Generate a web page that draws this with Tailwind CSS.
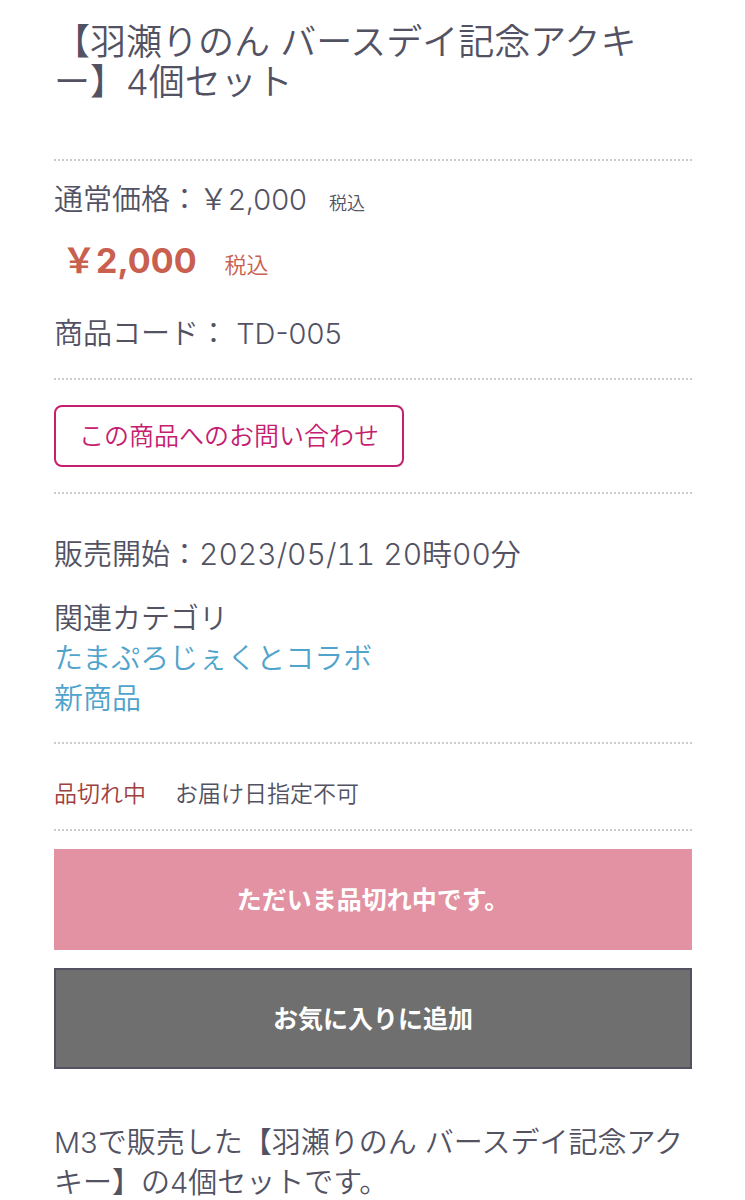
<!DOCTYPE html>
<html lang="ja">
<head>
<meta charset="utf-8">
<meta name="viewport" content="width=device-width, initial-scale=1">
<title>羽瀬りのん バースデイ記念アクキー 4個セット</title>
<script src="https://cdn.jsdelivr.net/npm/@tailwindcss/browser@4"></script>
</head>
<body class="bg-white font-['Inter','Noto_Sans_CJK_JP',sans-serif] font-[350] text-[#525263]">
<main class="pr-[53px] pl-[54px] pt-[22px]">
  <h1 class="border-b-2 border-dotted border-[#ccc] pb-[57px] text-4xl leading-[40px] font-[350]">【羽瀬りのん バースデイ記念アクキ<span class="whitespace-nowrap">ー】4個</span>セット</h1>
  <section class="border-b-2 border-dotted border-[#ccc] pt-[19px] pb-6 text-[29px] leading-[40px]">
    <p>通常価格：￥2,000<span class="ml-[22px] text-lg">税込</span></p>
    <p class="mt-[21px] pl-2 text-[34px] leading-[40px] font-bold text-[#c9604f]">￥2,000<span class="ml-7 text-[22px] font-[350]">税込</span></p>
    <p class="mt-[29px]">商品コード： TD-005</p>
  </section>
  <section class="border-b-2 border-dotted border-[#ccc] py-[25px]">
    <button type="button" class="block h-[62px] rounded-lg border-2 border-[#c5206f] px-[23px] text-[25px] leading-[40px] text-[#c5206f]">この商品へのお問い合わせ</button>
  </section>
  <section class="border-b-2 border-dotted border-[#ccc] pt-10 pb-[23px] text-[29px] leading-[40px]">
    <p>販売開始：<time datetime="2023-05-11T20:00" class="text-[30px] leading-[40px] tabular-nums">2023/05/11 20時00分</time></p>
    <h2 class="mt-6">関連カテゴリ</h2>
    <ul class="text-[#4fa3cc]">
      <li><a href="#">たまぷろじぇくとコラボ</a></li>
      <li><a href="#">新商品</a></li>
    </ul>
  </section>
  <ul class="flex gap-[29px] border-b-2 border-dotted border-[#ccc] pt-[30px] pb-[15px] text-[23px] leading-[40px]">
    <li class="text-[#a04040]">品切れ中</li>
    <li>お届け日指定不可</li>
  </ul>
  <div class="mt-[18px] grid gap-[18px] text-[25px] font-bold text-white">
    <button type="button" disabled class="h-[101px] bg-[#e292a2] pt-0.5">ただいま品切れ中です。</button>
    <button type="button" class="h-[101px] border-2 border-[#525263] bg-[#6f6f6f] pt-0.5">お気に入りに追加</button>
  </div>
  <p class="mt-[54px] text-[29px] leading-[40px]">M3で販売した【羽瀬りのん バースデイ記念アクキー】の4個セットです。</p>
</main>
</body>
</html>
